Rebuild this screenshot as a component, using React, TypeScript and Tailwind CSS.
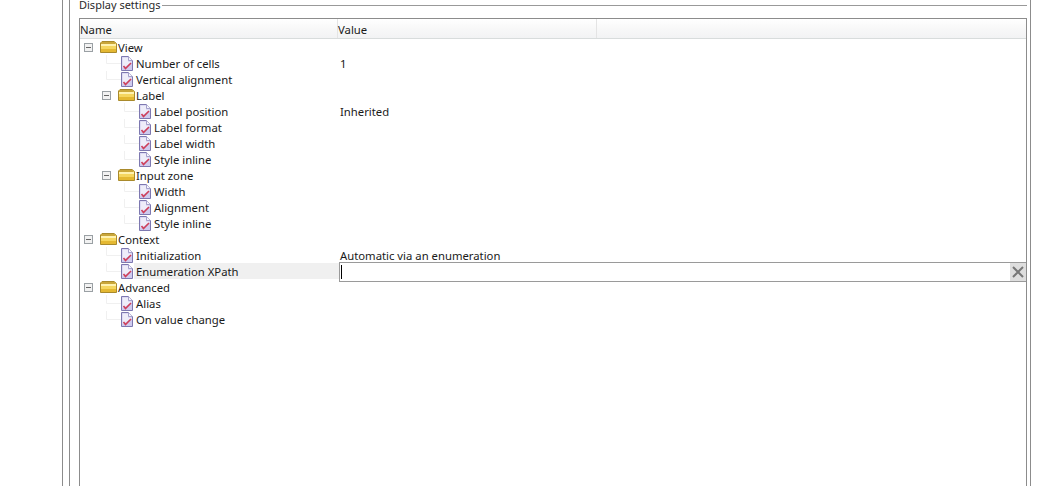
import React from "react";

type Row = { kind: "folder" | "leaf"; level: 0 | 1 | 2; name: string; value?: string; edit?: boolean };

const rows: Row[] = [
  { kind: "folder", level: 0, name: "View" },
  { kind: "leaf", level: 1, name: "Number of cells", value: "1" },
  { kind: "leaf", level: 1, name: "Vertical alignment" },
  { kind: "folder", level: 1, name: "Label" },
  { kind: "leaf", level: 2, name: "Label position", value: "Inherited" },
  { kind: "leaf", level: 2, name: "Label format" },
  { kind: "leaf", level: 2, name: "Label width" },
  { kind: "leaf", level: 2, name: "Style inline" },
  { kind: "folder", level: 1, name: "Input zone" },
  { kind: "leaf", level: 2, name: "Width" },
  { kind: "leaf", level: 2, name: "Alignment" },
  { kind: "leaf", level: 2, name: "Style inline" },
  { kind: "folder", level: 0, name: "Context" },
  { kind: "leaf", level: 1, name: "Initialization", value: "Automatic via an enumeration" },
  { kind: "leaf", level: 1, name: "Enumeration XPath", edit: true },
  { kind: "folder", level: 0, name: "Advanced" },
  { kind: "leaf", level: 1, name: "Alias" },
  { kind: "leaf", level: 1, name: "On value change" },
];

function Expander() {
  return (
    <svg width="9" height="9" viewBox="0 0 9 9" className="shrink-0">
      <rect x="0.5" y="0.5" width="8" height="8" fill="#f2f2f2" stroke="#9aa0a4" />
      <path d="M2 4.5h5" stroke="#666" />
    </svg>
  );
}

function Folder() {
  return (
    <svg width="17" height="12" viewBox="0 0 17 12" className="shrink-0">
      <path d="M0.5 11.5V2L2 0.5H14L16.5 2.5V11.5Z" fill="#f0cd55" stroke="#a98a2c" />
      <rect x="1" y="1" width="14" height="2" fill="#c9a63a" />
      <rect x="1" y="3" width="15" height="2" fill="#fff2b0" />
      <rect x="1" y="5" width="15" height="3" fill="#f5d65f" />
      <rect x="1" y="8" width="15" height="3" fill="#e4b832" />
    </svg>
  );
}

function Doc() {
  return (
    <svg width="12" height="15" viewBox="0 0 12 15" className="shrink-0">
      <path d="M0.5 0.5H7.5L11.5 4.5V14.5H0.5Z" fill="#cfcbee" stroke="#7d78b0" />
      <path d="M7.5 0.5V4.5H11.5" fill="#f6f5fc" stroke="#a5a1cc" />
      <path d="M1.5 1.5H7V5.5H10.5V7L1.5 12Z" fill="#eeedf9" />
      <path d="M2.5 10L4.5 12.5L10 7" fill="none" stroke="#cf3f5a" strokeWidth="1.6" />
    </svg>
  );
}

function Branch() {
  return (
    <svg width="15" height="16" viewBox="0 0 15 16" className="shrink-0">
      <path d="M0.5 0V8.5H15" fill="none" stroke="#f0f0f0" />
    </svg>
  );
}

function TreeRow({ row }: { row: Row }) {
  const indent = row.level === 0 ? "pl-1" : row.level === 1 ? "pl-[22px]" : "pl-10";
  const leafIndent = row.level === 1 ? "pl-[26px]" : "pl-11";
  return (
    <div className={row.edit ? "flex h-4 relative" : "flex h-4"}>
      <div className="w-[259px] shrink-0 flex items-center h-4">
        {row.kind === "folder" ? (
          <div className={`flex items-center ${indent}`}>
            <Expander />
            <span className="w-[7px] shrink-0" />
            <Folder />
            <span className="ml-px leading-4 pt-px">{row.name}</span>
          </div>
        ) : (
          <div className={`flex items-center flex-1 h-4 ${leafIndent}`}>
            <Branch />
            <Doc />
            <span className={row.edit ? "ml-px pl-[2px] flex-1 h-4 leading-4 bg-[#f0f0f0] pt-px" : "ml-[3px] leading-4 pt-px"}>{row.name}</span>
          </div>
        )}
      </div>
      {row.edit ? (
        <div className="flex-1 h-5 -mt-px border-y border-l border-[#9a9a9a] bg-white flex items-center justify-between">
          <span className="ml-px w-px h-[14px] bg-black" />
          <span className="w-4 h-[18px] bg-[#dedede] flex items-center justify-center">
            <svg width="12" height="12" viewBox="0 0 12 12">
              <path d="M1 1L11 11M11 1L1 11" stroke="#777" strokeWidth="2" />
            </svg>
          </span>
        </div>
      ) : (
        <div className="flex-1 pl-px leading-4 pt-px">{row.value}</div>
      )}
    </div>
  );
}

export default function App() {
  return (
    <div className="w-[1040px] h-[486px] overflow-hidden bg-white pl-[62px] pr-[9px] text-[11.3px] text-[#1a1a1a] font-['Noto_Sans','Open_Sans',sans-serif]">
      <div className="h-full border-x border-[#8c8c8c] pl-[6px]">
        <div className="h-full border-l border-[#8c8c8c] pl-[9px] pr-[3px]">
          <div className="flex h-[18px] items-start">
            <span className="leading-[10px] text-[#2a2a2a] text-[11px]">Display settings</span>
            <span className="flex-1 ml-[2px] mt-[5px] border-t border-[#999]" />
          </div>
          <div className="h-[600px] border border-[#8c8c8c]">
            <div className="flex h-5 border-b border-[#d8dcdc] bg-gradient-to-b from-white via-[#f8f8f8] to-[#f2f3f4] leading-[22px]">
              <div className="w-[258px] border-r border-[#e4e4e4]">Name</div>
              <div className="w-[259px] border-r border-[#e4e4e4]">Value</div>
              <div className="flex-1" />
            </div>
            {rows.map((r, i) => (
              <TreeRow key={i} row={r} />
            ))}
          </div>
        </div>
      </div>
    </div>
  );
}
